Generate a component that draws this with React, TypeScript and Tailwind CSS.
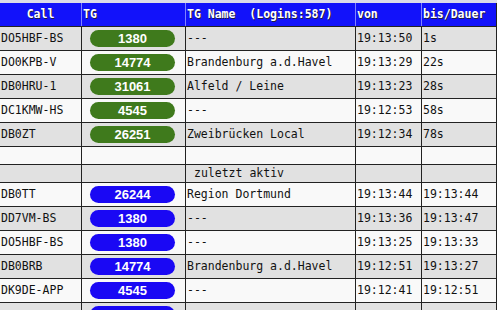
type Row = {
  call: string;
  tg: string;
  name: string;
  von: string;
  bis: string;
};

const active: Row[] = [
  { call: "DO5HBF-BS", tg: "1380", name: "---", von: "19:13:50", bis: "1s" },
  { call: "DO0KPB-V", tg: "14774", name: "Brandenburg a.d.Havel", von: "19:13:29", bis: "22s" },
  { call: "DB0HRU-1", tg: "31061", name: "Alfeld / Leine", von: "19:13:23", bis: "28s" },
  { call: "DC1KMW-HS", tg: "4545", name: "---", von: "19:12:53", bis: "58s" },
  { call: "DB0ZT", tg: "26251", name: "Zweibrücken Local", von: "19:12:34", bis: "78s" },
];

const recent: Row[] = [
  { call: "DB0TT", tg: "26244", name: "Region Dortmund", von: "19:13:44", bis: "19:13:44" },
  { call: "DD7VM-BS", tg: "1380", name: "---", von: "19:13:36", bis: "19:13:47" },
  { call: "DO5HBF-BS", tg: "1380", name: "---", von: "19:13:25", bis: "19:13:33" },
  { call: "DB0BRB", tg: "14774", name: "Brandenburg a.d.Havel", von: "19:12:51", bis: "19:13:27" },
  { call: "DK9DE-APP", tg: "4545", name: "---", von: "19:12:41", bis: "19:12:51" },
  // only the top edge of this row is on screen
  { call: "", tg: "", name: "", von: "", bis: "" },
];

const grid = "grid grid-cols-[81px_104px_170px_66px_76px] border-r border-[#8a8a8a]";
const cell = "border-l border-[#222] pl-[1px] flex items-center overflow-hidden whitespace-pre";

function Pill({ tg, live }: { tg: string; live: boolean }) {
  return (
    <div
      className={`ml-[8px] flex h-[17px] w-[85px] items-center justify-center rounded-full text-[13px] font-bold text-white ${
        live ? "bg-[#3f7a1c]" : "bg-[#1a08f4]"
      }`}
      style={{ fontFamily: '"Liberation Sans", Arial, sans-serif' }}
    >
      {tg}
    </div>
  );
}

function DataRow({ row, i, live }: { row: Row; i: number; live: boolean }) {
  const bg = i % 2 === 0 ? "bg-[#e1e1e1]" : "bg-[#f9f9f9]";
  return (
    <div className={`${grid} ${bg} h-6 border-b border-[#222]`}>
      <div className="flex items-center overflow-hidden whitespace-pre pl-[1px]">{row.call}</div>
      <div className="flex items-center border-l border-[#222]">
        <Pill tg={row.tg} live={live} />
      </div>
      <div className={cell}>{row.name}</div>
      <div className={cell}>{row.von}</div>
      <div className={cell}>{row.bis}</div>
    </div>
  );
}

export default function App() {
  return (
    <div
      className="h-[310px] w-[502px] overflow-hidden bg-white text-[11.5px] text-[#111]"
      style={{ fontFamily: '"DejaVu Sans Mono", "Liberation Mono", monospace' }}
    >
      <div className="w-[497px] border-t-[3px] border-[#dcdce8]">
        <div
          className={`${grid} h-6 border-b border-[#222] bg-[#1212fa] font-bold text-white [text-shadow:1px_1px_0_#202040]`}
        >
          <div className="flex items-center justify-center">Call</div>
          <div className="flex items-center border-l border-[#8080ff] pl-[1px]">TG</div>
          <div className="flex items-center whitespace-pre border-l border-[#8080ff] pl-[1px]">
            TG Name  (Logins:587)
          </div>
          <div className="flex items-center border-l border-[#8080ff] pl-[1px]">von</div>
          <div className="flex items-center border-l border-[#8080ff] pl-[1px]">bis/Dauer</div>
        </div>

        {active.map((r, i) => (
          <DataRow key={"a" + i} row={r} i={i} live />
        ))}

        <div className={`${grid} h-[18px] border-b border-[#222] bg-[#f9f9f9]`}>
          <div />
          <div className="border-l border-[#222]" />
          <div className="border-l border-[#222]" />
          <div className="border-l border-[#222]" />
          <div className="border-l border-[#222]" />
        </div>
        <div className={`${grid} h-[18px] border-b border-[#222] bg-[#e1e1e1]`}>
          <div />
          <div className="border-l border-[#222]" />
          <div className={`${cell} pl-[8px]`}>zuletzt aktiv</div>
          <div className="border-l border-[#222]" />
          <div className="border-l border-[#222]" />
        </div>

        {recent.map((r, i) => (
          <DataRow key={"r" + i} row={r} i={i + 1} live={false} />
        ))}
      </div>
    </div>
  );
}
